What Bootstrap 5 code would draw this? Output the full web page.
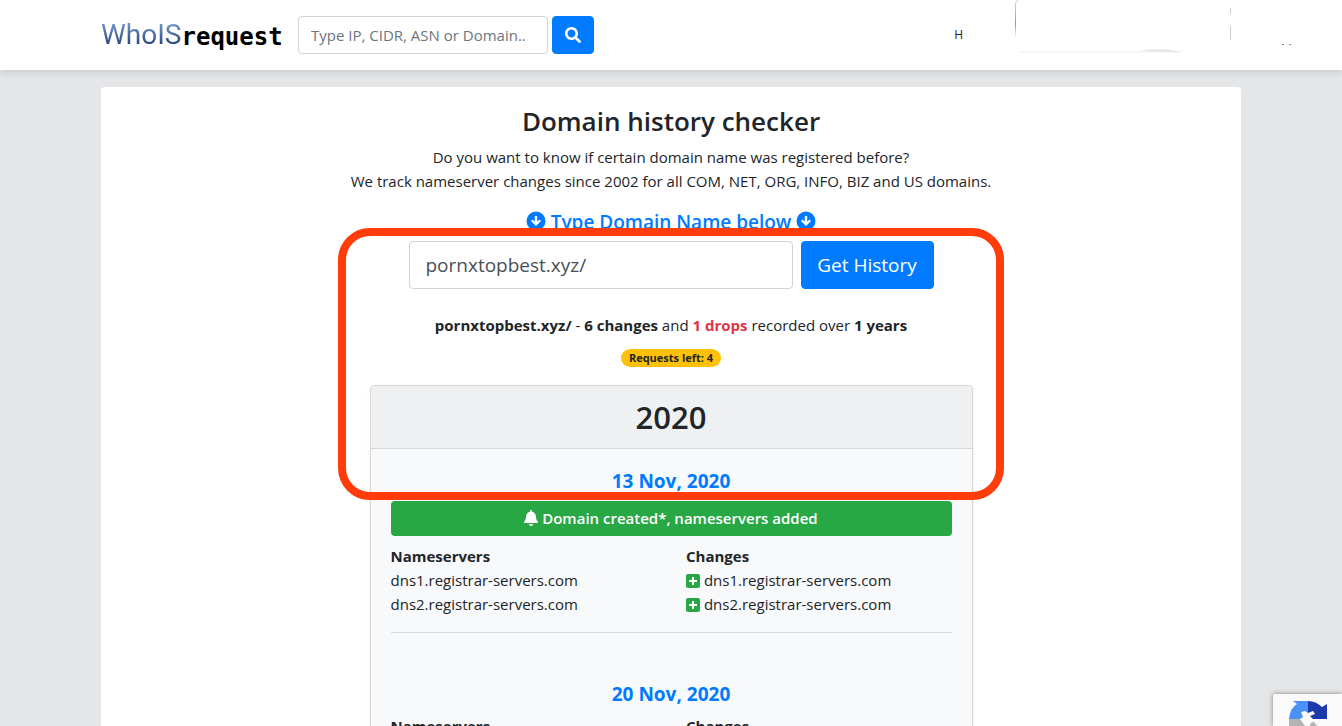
<!DOCTYPE html>
<html lang="en">
<head>
<meta charset="utf-8">
<meta name="viewport" content="width=device-width, initial-scale=1">
<title>Domain history checker - WhoISrequest</title>
<link href="https://cdn.jsdelivr.net/npm/bootstrap@5.3.0/dist/css/bootstrap.min.css" rel="stylesheet">
<style>
  body { background: #e5e6e8; color: #212529; font: 400 15px/24px "Open Sans", "Noto Sans", sans-serif; }
  .site-bar { background: #fff; box-shadow: 0 2px 8px rgba(0,0,0,.14); }
  .wrap-x { --bs-gutter-x: 0; }
  .logo { line-height: 38px; width: 181px; margin-right: 16px; color: #000; text-decoration: none; white-space: nowrap; }
  .logo-who { font-family: Roboto, "Liberation Sans", sans-serif; font-size: 28px; background: linear-gradient(#6f93c9 20%, #1f3f78 80%); -webkit-background-clip: text; background-clip: text; color: transparent; }
  .logo-req { font: 700 24px/42px "DejaVu Sans Mono", monospace; height: 38px; }
  .form-control { border-color: #ced4da; border-radius: 4px; }
  .search-box { width: 250px; height: 38px; font-size: 15px; }
  .form-control::placeholder { color: #6c757d; }
  .btn-primary { --bs-btn-bg: #007bff; --bs-btn-border-color: #007bff; border-radius: 4px; }
  .search-btn { width: 42px; height: 38px; }
  .nav-h { font-size: 12px; color: #222; margin-right: 278px; text-decoration: none; }
  .bar-marks { width: 340px; height: 60px; }
  .panel { background: #fff; border-radius: 4px; margin-top: 17px; padding: 17px 16px 16px; }
  .title { font-size: 26px; line-height: 34px; font-weight: 600; margin-bottom: 7px; }
  .prompt { font-size: 19px; line-height: 24px; font-weight: 600; color: #007bff; margin: 17px 0 7px; }
  .history { max-width: 603px; }
  .domain-box { height: 48px; font-size: 19px; padding: 8px 16px; color: #495057; }
  .lookup { max-width: 525px; }
  .get-btn { width: 133px; height: 48px; font-size: 19px; padding: 0; flex: none; }
  .drops { color: #dc3545; }
  .summary { margin: 24px 0 12px; }
  .left-badge { background: #ffc107; color: #212529; font-size: 11px; line-height: 18px; font-weight: 700; padding: 0 8px; border-radius: 9px; display: block; }
  .year-card { background: #f8f9fa; border: 1px solid #d5d7d9; border-radius: 4px; margin-top: 18px; }
  .year-card .card-header { background: #eff0f1; border-color: #d5d7d9; padding: 12px 20px; }
  .year { font-size: 31px; line-height: 38px; font-weight: 600; }
  .year-card .card-body { padding: 20px; }
  .day { font-size: 19px; line-height: 24px; font-weight: 700; color: #007bff; margin-bottom: 8px; }
  .created { background: #28a745; color: #fff; font-weight: 600; line-height: 35px; border-radius: 4px; margin-bottom: 8px; }
  .ns-row { --bs-gutter-x: 30px; }
  .rule { border-color: #d9dbdd; opacity: 1; margin: 16px 0 49px; }
  .marker { position: absolute; top: -13px; left: -32px; right: -31px; height: 272px; border: 8px solid #ff3c0a; border-radius: 32px; pointer-events: none; z-index: 2; }
  .captcha { width: 69px; height: 32px; background: #fafafa; box-shadow: 0 0 5px #808080; border-radius: 2px 0 0 0; overflow: hidden; }
  .ico { fill: currentColor; vertical-align: -2px; }
</style>
</head>
<body>
<header class="site-bar position-relative">
  <div class="container-xl wrap-x d-flex align-items-center py-3">
    <a class="logo d-flex" href="#"><span class="logo-who">WhoIS</span><span class="logo-req">request</span></a>
    <form class="d-flex gap-1">
      <input class="form-control search-box" type="text" aria-label="Search" placeholder="Type IP, CIDR, ASN or Domain..">
      <button class="btn btn-primary search-btn p-0" type="button" aria-label="Search"><svg class="ico" width="16" height="16" viewBox="0 0 512 512"><path d="M505 442.700 405.300 343c-4.500-4.500-10.600-7-17-7H372c27.600-35.300 44-79.700 44-128C416 93.100 322.900 0 208 0S0 93.100 0 208s93.100 208 208 208c48.300 0 92.700-16.400 128-44v16.300c0 6.400 2.500 12.500 7 17l99.700 99.700c9.400 9.400 24.600 9.400 33.900 0l28.300-28.300c9.400-9.400 9.400-24.600.1-34zM208 336c-70.700 0-128-57.200-128-128 0-70.700 57.200-128 128-128 70.700 0 128 57.200 128 128 0 70.700-57.200 128-128 128z"/></svg></button>
    </form>
    <a class="nav-h ms-auto" href="#">H</a>
  </div>
  <svg class="bar-marks position-absolute top-0 end-0" viewBox="0 0 340 60" aria-hidden="true">
    <defs><linearGradient id="edge" x2="0" y2="1"><stop offset="0" stop-color="#ccc"/><stop offset=".6" stop-color="#999"/><stop offset="1" stop-color="#fff"/></linearGradient></defs>
    <path d="M13 4h1v34h-1z" fill="url(#edge)"/><path d="M13.500 4q0-3 3-4" fill="none" stroke="#ccc"/>
    <path d="M16 52h164" stroke="#f7f7f7" stroke-width="2"/><path d="M137 51q22-4 44 1z" fill="#e2e2e2"/>
    <path d="M228.500 8v6M228.500 26v14" stroke="#ccc"/>
    <path d="M280 44h2v1h-2zM287 44h2v1h-2z" fill="#888"/>
  </svg>
</header>

<main class="container-xl wrap-x">
  <div class="panel text-center">
    <h1 class="title">Domain history checker</h1>
    <p class="mb-0">Do you want to know if certain domain name was registered before?<br>We track nameserver changes since 2002 for all COM, NET, ORG, INFO, BIZ and US domains.</p>
    <h2 class="prompt">
      <svg class="ico" width="20" height="20" viewBox="0 0 20 20"><path fill-rule="evenodd" d="M10 .500a9.500 9.500 0 1 1 0 19 9.500 9.500 0 0 1 0-19zM8.800 5v5.800L6.500 8.500 5 10l5 5 5-5-1.500-1.500-2.300 2.300V5z"/></svg>
      Type Domain Name below
      <svg class="ico" width="20" height="20" viewBox="0 0 20 20"><path fill-rule="evenodd" d="M10 .500a9.500 9.500 0 1 1 0 19 9.500 9.500 0 0 1 0-19zM8.800 5v5.800L6.500 8.500 5 10l5 5 5-5-1.500-1.500-2.300 2.300V5z"/></svg>
    </h2>
    <div class="history position-relative mx-auto">
      <div class="marker"></div>
      <form class="lookup d-flex gap-2 mx-auto">
        <input class="form-control domain-box" type="text" aria-label="Domain name" value="pornxtopbest.xyz/">
        <button class="btn btn-primary get-btn" type="button">Get History</button>
      </form>
      <p class="summary"><strong>pornxtopbest.xyz/</strong> - <strong>6 changes</strong> and <strong class="drops">1 drops</strong> recorded over <strong>1 years</strong></p>
      <div class="d-flex justify-content-center"><span class="left-badge">Requests left: 4</span></div>
      <section class="card year-card shadow-sm">
        <div class="card-header"><h2 class="year mb-0">2020</h2></div>
        <div class="card-body">
          <h3 class="day">13 Nov, 2020</h3>
          <div class="created"><svg class="ico" width="14" height="16" viewBox="0 0 448 512"><path d="M224 512c35.300 0 64-28.700 64-64H160c0 35.300 28.600 64 64 64zm215.400-149.700c-19.300-20.800-55.500-52-55.500-154.300 0-77.700-54.500-139.900-127.900-155.200V32c0-17.700-14.300-32-32-32s-32 14.300-32 32v20.800C118.600 68.100 64.100 130.300 64.100 208c0 102.300-36.200 133.500-55.500 154.300-6 6.400-8.600 14.100-8.600 21.700.1 16.400 13 32 32.100 32h383.800c19.100 0 32-15.600 32.100-32 0-7.600-2.600-15.300-8.600-21.700z"/></svg> Domain created*, nameservers added</div>
          <div class="row ns-row text-start">
            <div class="col-6"><strong>Nameservers</strong><br>dns1.registrar-servers.com<br>dns2.registrar-servers.com</div>
            <div class="col-6"><strong>Changes</strong><br>
              <svg class="ico" width="14" height="14" viewBox="0 0 14 14"><rect width="14" height="14" rx="2" fill="#28a745"/><path d="M7 3v8M3 7h8" stroke="#fff" stroke-width="2"/></svg> dns1.registrar-servers.com<br>
              <svg class="ico" width="14" height="14" viewBox="0 0 14 14"><rect width="14" height="14" rx="2" fill="#28a745"/><path d="M7 3v8M3 7h8" stroke="#fff" stroke-width="2"/></svg> dns2.registrar-servers.com</div>
          </div>
          <hr class="rule">
          <h3 class="day">20 Nov, 2020</h3>
          <div class="row ns-row text-start">
            <div class="col-6"><strong>Nameservers</strong></div>
            <div class="col-6"><strong>Changes</strong></div>
          </div>
        </div>
      </section>
    </div>
  </div>
</main>

<div class="captcha position-fixed bottom-0 end-0">
  <svg class="d-block" width="69" height="32" viewBox="0 0 69 32" aria-hidden="true">
    <path d="M16 25Q17 14 24 10L20 7H35V19L32 17L28 18L30 23L27 25Z" fill="#4a90f5"/>
    <path d="M35 7Q43 7 49 13L54 10V25H40L37 22L42 20L40 17L35 19Z" fill="#1c3aa9"/>
    <path d="M16 25H27L32 32H16ZM37 32Q37 28 41 28L44 32Z" fill="#b4b4b4"/>
  </svg>
</div>
<script src="https://cdn.jsdelivr.net/npm/bootstrap@5.3.0/dist/js/bootstrap.bundle.min.js"></script>
</body>
</html>
